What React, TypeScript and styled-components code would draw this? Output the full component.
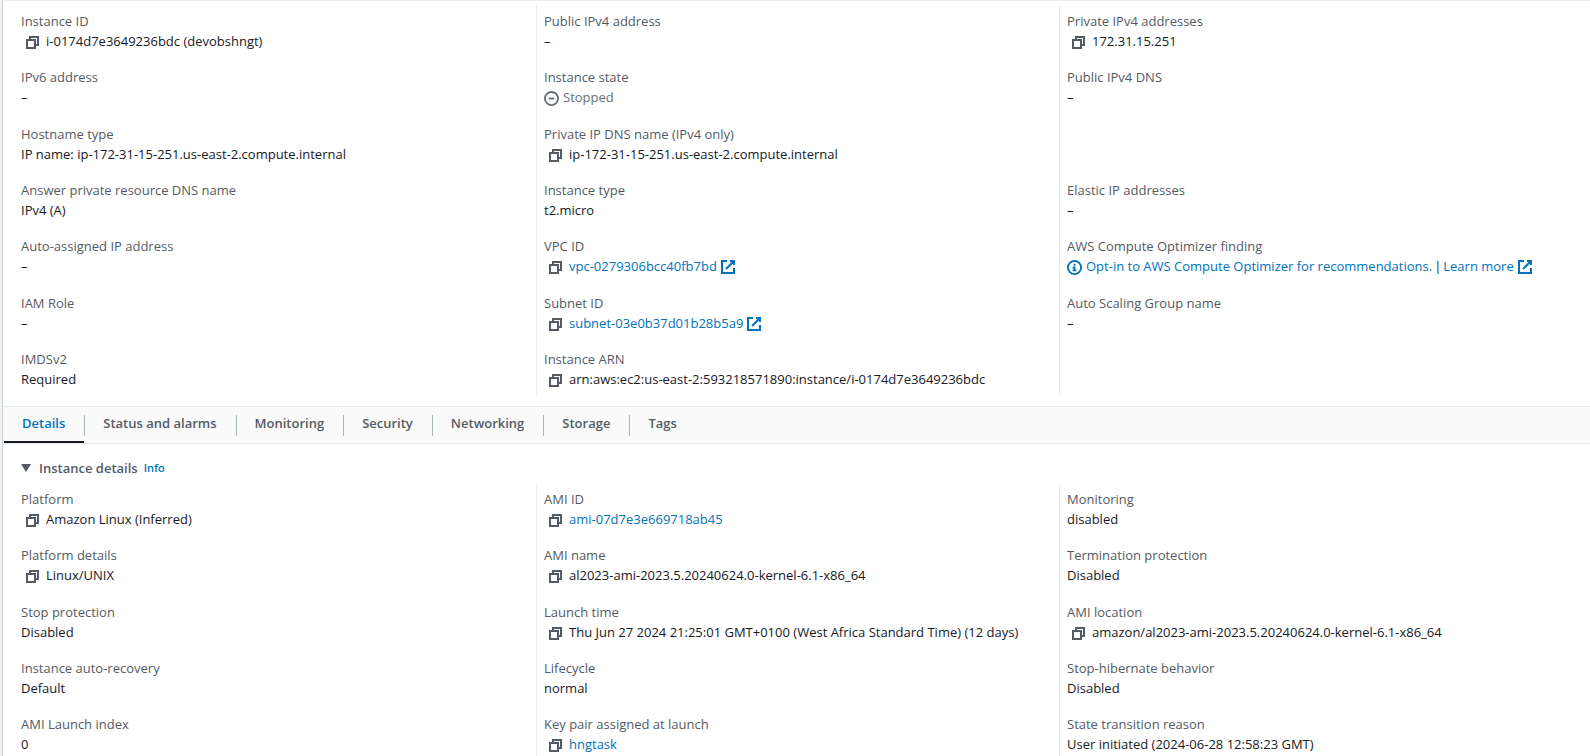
import React, { useState } from "react";
import styled, { createGlobalStyle } from "styled-components";

const color = {
  text: "#16191f",
  label: "#545b64",
  inactive: "#687078",
  link: "#0073bb",
  line: "#eaeded",
  edge: "#c9d1d2",
  separator: "#aab7b8",
};

const GlobalStyle = createGlobalStyle`
  *, *::before, *::after { box-sizing: border-box; }
  body {
    margin: 0;
    background: #f2f3f3;
    color: ${color.text};
    font: 13px/20px "Open Sans", "Noto Sans", sans-serif;
  }
  button { font: inherit; color: inherit; border: 0; background: none; padding: 0; cursor: pointer; }
`;

const Shell = styled.main`
  height: 100vh;
  overflow: hidden;
  margin-left: 2px;
  border-left: 1px solid ${color.edge};
  border-top: 1px solid ${color.line};
  background: #fff;
`;

const Summary = styled.section`
  padding: 4px 18px 9px;
`;

const Details = styled.section`
  padding: 14px 18px 0;
`;

const Columns = styled.div`
  display: grid;
  grid-template-columns: repeat(3, minmax(0, 1fr));
  column-gap: 18px;
`;

const Column = styled.dl<{ $minHeight: number }>`
  display: flex;
  flex-direction: column;
  justify-content: space-between;
  min-height: ${(p) => p.$minHeight}px;
  margin: 0;
  padding: 6px 0 8px;

  & + & {
    margin-left: -8px;
    padding-left: 7px;
    border-left: 1px solid ${color.line};
  }
`;

const Field = styled.div`
  min-height: 40px;
`;

const Label = styled.dt`
  color: ${color.label};
`;

const Value = styled.dd`
  display: flex;
  align-items: center;
  height: 20px;
  margin: 0;
  white-space: nowrap;
`;

const CopyButton = styled.button`
  display: flex;
  margin: 3px 7px 0 5px;
  color: ${color.label};
`;

const Link = styled.a`
  display: inline-flex;
  align-items: center;
  gap: 4px;
  color: ${color.link};
  text-decoration: none;
  &:hover { text-decoration: underline; }
`;

const Status = styled.span`
  display: inline-flex;
  align-items: center;
  gap: 4px;
  color: ${color.inactive};
`;

const Bar = styled.span`
  margin: 0 2px;
`;

const Icon = styled.svg`
  flex: none;
  display: block;
  fill: none;
  stroke: currentColor;
  stroke-width: 2;
`;

const LoweredIcon = styled(Icon)`
  margin-top: 2px;
`;

const TabBar = styled.ul`
  display: flex;
  height: 38px;
  margin: 0;
  padding: 0 0 0 1px;
  list-style: none;
  background: #fafafa;
  border-top: 1px solid ${color.line};
  border-bottom: 1px solid ${color.line};
`;

const TabItem = styled.li`
  display: flex;
  align-items: center;

  & + &::before {
    content: "";
    width: 1px;
    height: 21px;
    background: ${color.separator};
  }
`;

const Tab = styled.button<{ $active: boolean }>`
  height: 36px;
  padding: 6px 19px 8px 18px;
  font-weight: 600;
  color: ${(p) => (p.$active ? color.link : color.label)};
  border-bottom: 2px solid ${(p) => (p.$active ? color.text : "transparent")};
`;

const Heading = styled.header`
  display: flex;
  align-items: center;
  gap: 6px;
  margin-bottom: 5px;
`;

const Title = styled.h2`
  margin: 0;
  font-size: 13px;
  line-height: 20px;
  color: ${color.label};
`;

const Toggle = styled.button`
  display: flex;
  align-items: center;
  gap: 8px;
  font-weight: 600;
`;

const InfoLink = styled(Link)`
  font-size: 11px;
  font-weight: 600;
`;

const CopyIcon = () => (
  <Icon width="13" height="13" viewBox="0 0 13 13" aria-hidden="true">
    <path d="M1 4h8v8H1z" />
    <path d="M4 4V1h8v8H9" />
  </Icon>
);

const ExternalIcon = () => (
  <LoweredIcon width="14" height="14" viewBox="1 1 14 14" aria-hidden="true">
    <path d="M10 2h4v4M6 10l8-8M14 9v5H2V2h5" />
  </LoweredIcon>
);

const StoppedIcon = () => (
  <LoweredIcon width="15" height="15" viewBox="0 0 16 16" aria-hidden="true">
    <circle cx="8" cy="8" r="7" />
    <path d="M11 8H5" />
  </LoweredIcon>
);

const InfoIcon = () => (
  <LoweredIcon width="15" height="15" viewBox="0 0 16 16" aria-hidden="true">
    <circle cx="8" cy="8" r="7" />
    <path d="M8 11V8H6M10 11H6M8 6V4" />
  </LoweredIcon>
);

interface FieldData {
  label: string;
  value?: string;
  copy?: boolean;
  link?: boolean;
  external?: boolean;
  content?: React.ReactNode;
}

const summary: (FieldData | null)[][] = [
  [
    { label: "Instance ID", value: "i-0174d7e3649236bdc (devobshngt)", copy: true },
    { label: "IPv6 address" },
    { label: "Hostname type", value: "IP name: ip-172-31-15-251.us-east-2.compute.internal" },
    { label: "Answer private resource DNS name", value: "IPv4 (A)" },
    { label: "Auto-assigned IP address" },
    { label: "IAM Role" },
    { label: "IMDSv2", value: "Required" },
  ],
  [
    { label: "Public IPv4 address" },
    { label: "Instance state", content: <Status><StoppedIcon />Stopped</Status> },
    { label: "Private IP DNS name (IPv4 only)", value: "ip-172-31-15-251.us-east-2.compute.internal", copy: true },
    { label: "Instance type", value: "t2.micro" },
    { label: "VPC ID", value: "vpc-0279306bcc40fb7bd", copy: true, link: true, external: true },
    { label: "Subnet ID", value: "subnet-03e0b37d01b28b5a9", copy: true, link: true, external: true },
    { label: "Instance ARN", value: "arn:aws:ec2:us-east-2:593218571890:instance/i-0174d7e3649236bdc", copy: true },
  ],
  [
    { label: "Private IPv4 addresses", value: "172.31.15.251", copy: true },
    { label: "Public IPv4 DNS" },
    null,
    { label: "Elastic IP addresses" },
    {
      label: "AWS Compute Optimizer finding",
      content: (
        <>
          <Link href="#optimizer"><InfoIcon />Opt-in to AWS Compute Optimizer for recommendations.</Link>
          <Bar>|</Bar>
          <Link href="#learn-more">Learn more<ExternalIcon /></Link>
        </>
      ),
    },
    { label: "Auto Scaling Group name" },
    null,
  ],
];

const details: FieldData[][] = [
  [
    { label: "Platform", value: "Amazon Linux (Inferred)", copy: true },
    { label: "Platform details", value: "Linux/UNIX", copy: true },
    { label: "Stop protection", value: "Disabled" },
    { label: "Instance auto-recovery", value: "Default" },
    { label: "AMI Launch index", value: "0" },
  ],
  [
    { label: "AMI ID", value: "ami-07d7e3e669718ab45", copy: true, link: true },
    { label: "AMI name", value: "al2023-ami-2023.5.20240624.0-kernel-6.1-x86_64", copy: true },
    { label: "Launch time", value: "Thu Jun 27 2024 21:25:01 GMT+0100 (West Africa Standard Time) (12 days)", copy: true },
    { label: "Lifecycle", value: "normal" },
    { label: "Key pair assigned at launch", value: "hngtask", copy: true, link: true },
  ],
  [
    { label: "Monitoring", value: "disabled" },
    { label: "Termination protection", value: "Disabled" },
    { label: "AMI location", value: "amazon/al2023-ami-2023.5.20240624.0-kernel-6.1-x86_64", copy: true },
    { label: "Stop-hibernate behavior", value: "Disabled" },
    { label: "State transition reason", value: "User initiated (2024-06-28 12:58:23 GMT)" },
  ],
];

const tabs = ["Details", "Status and alarms", "Monitoring", "Security", "Networking", "Storage", "Tags"];

function FieldView({ data }: { data: FieldData }) {
  const { label, value = "–", copy, link, external, content } = data;
  return (
    <Field>
      <Label>{label}</Label>
      <Value>
        {copy && (
          <CopyButton type="button" aria-label={`Copy ${label}`} onClick={() => navigator.clipboard?.writeText(value)}>
            <CopyIcon />
          </CopyButton>
        )}
        {content ?? (link ? <Link href={`#${value}`}>{value}{external && <ExternalIcon />}</Link> : value)}
      </Value>
    </Field>
  );
}

function FieldColumns({ columns, minHeight }: { columns: (FieldData | null)[][]; minHeight: number }) {
  return (
    <Columns>
      {columns.map((fields, c) => (
        <Column key={c} $minHeight={minHeight}>
          {fields.map((field, i) => (field ? <FieldView key={i} data={field} /> : <Field key={i} />))}
        </Column>
      ))}
    </Columns>
  );
}

export default function App() {
  const [active, setActive] = useState("Details");
  const [open, setOpen] = useState(true);
  return (
    <Shell>
      <GlobalStyle />
      <Summary>
        <FieldColumns columns={summary} minHeight={392} />
      </Summary>
      <TabBar role="tablist">
        {tabs.map((tab) => (
          <TabItem key={tab} role="presentation">
            <Tab type="button" role="tab" aria-selected={tab === active} $active={tab === active} onClick={() => setActive(tab)}>
              {tab}
            </Tab>
          </TabItem>
        ))}
      </TabBar>
      <Details>
        <Heading>
          <Title>
            <Toggle type="button" aria-expanded={open} onClick={() => setOpen(!open)}>
              <svg width="10" height="8" viewBox="0 0 10 8" fill="currentColor" aria-hidden="true">
                <path d="M0 0h10L5 8z" />
              </svg>
              Instance details
            </Toggle>
          </Title>
          <InfoLink href="#info">Info</InfoLink>
        </Heading>
        {open && <FieldColumns columns={details} minHeight={279} />}
      </Details>
    </Shell>
  );
}
